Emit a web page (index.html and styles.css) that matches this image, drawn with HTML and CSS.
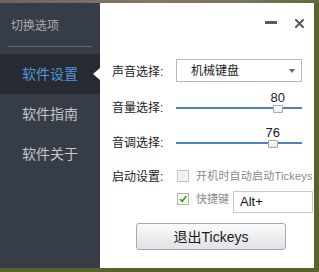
FILE: index.html
```html
<!DOCTYPE html>
<html lang="zh-CN">
<head>
<meta charset="utf-8">
<title>Tickeys</title>
<link rel="stylesheet" href="styles.css">
</head>
<body>
<div class="topstrip"></div>
<div class="window">
  <aside class="sidebar">
    <div class="side-head">切换选项</div>
    <div class="side-sep"></div>
    <nav class="side-nav">
      <div class="side-item active">软件设置<span class="arrow"></span></div>
      <div class="side-item">软件指南</div>
      <div class="side-item">软件关于</div>
    </nav>
  </aside>
  <main class="panel">
    <div class="titlebar">
      <span class="minimize"></span>
      <svg class="close" width="9" height="9" viewBox="0 0 9 9"><path d="M1 1 L8 8 M8 1 L1 8" stroke="#5a5a5a" stroke-width="2" stroke-linecap="square"/></svg>
    </div>
    <div class="row row-select">
      <span class="label">声音选择:</span>
      <div class="combo"><span class="combo-text">机械键盘</span><span class="combo-arrow"></span></div>
    </div>
    <div class="row row-slider first">
      <span class="label">音量选择:</span>
      <div class="slider">
        <span class="slider-value" style="left: 80%">80</span>
        <span class="track"></span>
        <span class="thumb" style="left: 80%"></span>
      </div>
    </div>
    <div class="row row-slider">
      <span class="label">音调选择:</span>
      <div class="slider">
        <span class="slider-value" style="left: 76%">76</span>
        <span class="track"></span>
        <span class="thumb" style="left: 76%"></span>
      </div>
    </div>
    <div class="row row-check">
      <span class="label">启动设置:</span>
      <span class="checkbox disabled"></span>
      <span class="check-text long">开机时自动启动Tickeys</span>
    </div>
    <div class="row row-hotkey">
      <span class="label"></span>
      <div class="hotkey-check">
        <span class="checkbox checked"><svg width="12" height="12" viewBox="0 0 12 12"><path d="M2.5 6 L5 8.8 L10 2.5" fill="none" stroke="#3f9a2e" stroke-width="2"/></svg></span>
        <span class="check-text short">快捷键</span>
      </div>
      <div class="hotkey-box">Alt+</div>
    </div>
    <div class="row row-button">
      <button class="quit">退出Tickeys</button>
    </div>
  </main>
</div>
</body>
</html>
```
FILE: styles.css
```css
html, body {
  margin: 0;
  padding: 0;
}
body {
  width: 319px;
  height: 272px;
  overflow: hidden;
  background: #56632a;
  font-family: "Liberation Sans", "Noto Sans CJK SC", sans-serif;
}
.topstrip {
  height: 3px;
  background: linear-gradient(90deg, #6f625e, #857566 45%, #7d7560 75%, #63683a);
}
.window {
  display: flex;
  width: 314px;
  height: 265px;
}
.sidebar {
  width: 100px;
  flex: none;
  background: #363d47;
  display: flex;
  flex-direction: column;
}
.side-head {
  height: 43px;
  box-sizing: border-box;
  padding: 15px 0 0 11px;
  font-size: 12px;
  line-height: 17px;
  color: #a8acb2;
}
.side-sep {
  height: 1px;
  margin: 0 8px;
  background: #646a73;
}
.side-nav {
  margin-top: 7px;
  display: flex;
  flex-direction: column;
}
.side-item {
  position: relative;
  height: 40px;
  line-height: 40px;
  text-align: center;
  font-size: 14px;
  color: #c3c6ca;
}
.side-item.active {
  background: #262b32;
  color: #5195dc;
}
.arrow {
  position: absolute;
  right: 0;
  top: 14px;
  width: 0;
  height: 0;
  border-top: 6px solid transparent;
  border-bottom: 6px solid transparent;
  border-right: 7px solid #ffffff;
}
.panel {
  flex: 1;
  min-width: 0;
  overflow: hidden;
  background: #ffffff;
  padding-left: 12px;
  color: #1a1a1a;
}
.titlebar {
  height: 40px;
  box-sizing: border-box;
  padding: 15px 10px 0 0;
  display: flex;
  justify-content: flex-end;
  align-items: flex-start;
  gap: 18px;
}
.minimize {
  width: 12px;
  height: 3px;
  margin-top: 3px;
  background: #5a5a5a;
}
.close {
  display: block;
  margin-top: 1px;
}
.row {
  display: flex;
  align-items: center;
}
.label {
  width: 64px;
  flex: none;
  font-size: 12px;
  line-height: 14px;
  color: #1a1a1a;
}
.row-select {
  margin-top: 16px;
  height: 23px;
}
.row-select .label {
  padding-top: 3px;
}
.combo {
  width: 126px;
  height: 23px;
  box-sizing: border-box;
  border: 1px solid #b9b9b9;
  display: flex;
  align-items: center;
  padding: 0 6px 0 14px;
}
.combo-text {
  flex: 1;
  font-size: 12px;
  line-height: 14px;
  color: #1a1a1a;
}
.combo-arrow {
  width: 0;
  height: 0;
  border-left: 3.5px solid transparent;
  border-right: 3.5px solid transparent;
  border-top: 4px solid #666;
  margin-top: 1px;
}
.row-slider {
  height: 35px;
  align-items: flex-start;
}
.row-slider.first {
  margin-top: 8px;
}
.row-slider .label {
  margin-top: 11px;
}
.slider {
  position: relative;
  width: 126px;
  height: 35px;
}
.track {
  display: block;
  margin-top: 17px;
  height: 2px;
  background: #4a83bf;
}
.thumb {
  position: absolute;
  top: 15px;
  width: 8px;
  height: 6px;
  margin-left: -4px;
  background: linear-gradient(#ffffff, #e6e9ec);
  border: 1px solid #a6a6a6;
  border-radius: 1px;
}
.slider-value {
  position: absolute;
  top: 1px;
  width: 20px;
  margin-left: -9px;
  text-align: center;
  font-size: 13px;
  line-height: 14px;
  color: #1a1a1a;
}
.row-check {
  margin-top: 6px;
  height: 20px;
}
.row-check .label {
  padding-top: 2px;
}
.checkbox {
  width: 12px;
  height: 12px;
  box-sizing: border-box;
  margin-left: 1px;
  flex: none;
  border: 1px solid #c6c6c6;
  background: #f1f1f1;
  display: flex;
  align-items: center;
  justify-content: center;
}
.checkbox.checked {
  border-color: #a9b7a6;
  background: #f6f9f5;
}
.checkbox svg {
  display: block;
}
.check-text {
  margin-left: 7px;
  font-size: 12px;
  line-height: 14px;
  color: #8a8a8a;
  white-space: nowrap;
}
.check-text.long {
  font-size: 11px;
  letter-spacing: 0.2px;
}
.check-text.short {
  font-size: 11px;
}
.row-hotkey {
  margin-top: 5px;
  height: 22px;
  align-items: flex-start;
}
.hotkey-check {
  display: flex;
  align-items: center;
  margin-top: 1px;
  height: 14px;
}
.hotkey-box {
  margin-left: 4px;
  width: 80px;
  height: 22px;
  box-sizing: border-box;
  border: 1px solid #c9c9c9;
  padding-left: 6px;
  font-size: 13px;
  line-height: 20px;
  color: #111;
}
.row-button {
  margin-top: 10px;
  padding-left: 24px;
}
.quit {
  width: 150px;
  height: 27px;
  box-sizing: border-box;
  border: 1px solid #a4a8ad;
  border-radius: 3px;
  background: linear-gradient(#fbfbfb, #eceef0 50%, #dfe3e7);
  font-family: "Liberation Sans", "Noto Sans CJK SC", sans-serif;
  font-size: 14px;
  line-height: 18px;
  color: #1a1a1a;
  padding: 0;
}
```
